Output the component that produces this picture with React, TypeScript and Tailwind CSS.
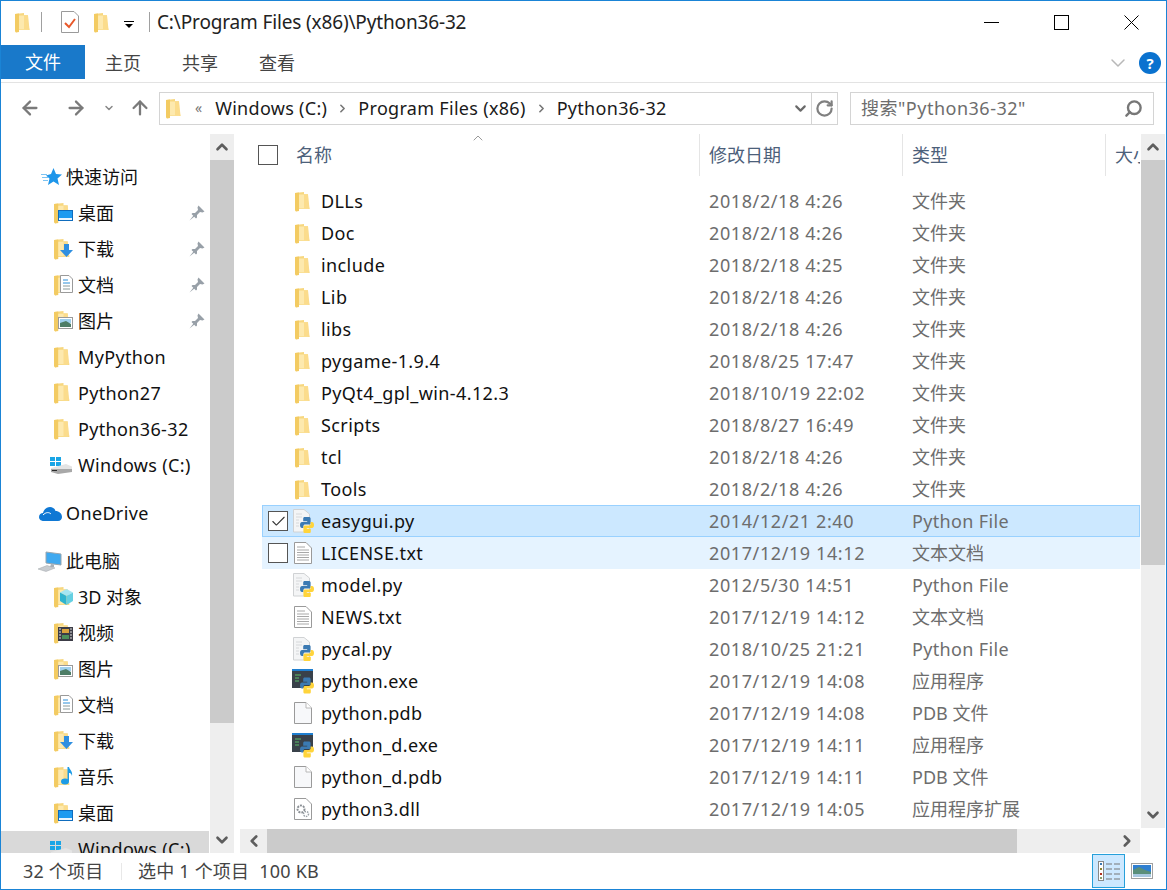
import React from 'react';
import { ArrowLeft, ArrowRight, ArrowUp, ChevronDown, ChevronUp, ChevronLeft, ChevronRight, RotateCw, Search, Check } from 'lucide-react';

const FONT = "font-['Noto_Sans','Noto_Sans_CJK_SC',sans-serif]";

// latin text in the reference runs a bit wider than Noto Sans, CJK does not
const track = (s: string) => (/[\u4e00-\u9fff]/.test(s) ? '' : 'tracking-[0.35px]');

const Folder: React.FC<{ size?: number }> = ({ size = 20 }) => (
  <svg width={size * 0.85} height={size * 1.05} viewBox="0 0 17 21" className="shrink-0">
    <path d="M1 2 L10 1 L10 3 L14 3 L14 15 L15.5 17 L15.5 18 L5 18 L2 20.5 L1 19 Z" fill="#f7d77f" />
    <path d="M1 2 L5 1.5 L5 20 L2 20.5 L1 19 Z" fill="#f3cb62" />
    <path d="M5 3.5 L14 3.5 L14.5 17.5 L5 17.5 Z" fill="#fde9ae" />
    <path d="M10 3.5 L14 3.5 L15.5 17.5 L10 17.5 Z" fill="#fbdc8c" />
  </svg>
);

const Overlay: React.FC<{ kind: string }> = ({ kind }) => {
  if (kind === 'desktop')
    return (
      <svg width="15" height="11" viewBox="0 0 15 11">
        <rect x="0.5" y="0.5" width="14" height="10" fill="#1e9bf0" stroke="#0f6cbd" />
        <rect x="1" y="8" width="13" height="2" fill="#eaf6ff" />
      </svg>
    );
  if (kind === 'down')
    return (
      <svg width="13" height="13" viewBox="0 0 13 13">
        <path d="M4 0 H9 V6 H13 L6.5 13 L0 6 H4 Z" fill="#2f8fe0" />
      </svg>
    );
  if (kind === 'doc')
    return (
      <svg width="13" height="18" viewBox="0 0 13 18">
        <path d="M.5.5 H9 L12.5 4 V17.5 H.5 Z" fill="#fff" stroke="#9a9a9a" />
        <path d="M3 5h5M3 8h7" stroke="#2d8fd8" />
        <path d="M3 11h7M3 14h7" stroke="#8a9a9a" />
      </svg>
    );
  if (kind === 'pic')
    return (
      <svg width="15" height="12" viewBox="0 0 15 12">
        <rect x="0.5" y="0.5" width="14" height="11" fill="#fff" stroke="#9a9a9a" />
        <rect x="2" y="2" width="11" height="4" fill="#9fd0ee" />
        <path d="M2 6 L8 4 L13 7 V10 H2 Z" fill="#4d7d66" />
      </svg>
    );
  if (kind === 'cube')
    return (
      <svg width="13" height="16" viewBox="0 0 13 16">
        <path d="M6.5 0 L13 3.5 L6.5 7 L0 3.5 Z" fill="#a5e6f2" />
        <path d="M0 3.5 L6.5 7 V16 L0 12 Z" fill="#2fb4cf" />
        <path d="M13 3.5 L6.5 7 V16 L13 12 Z" fill="#66d0e2" />
      </svg>
    );
  if (kind === 'video')
    return (
      <svg width="15" height="14" viewBox="0 0 15 14">
        <rect width="15" height="14" fill="#3c3c46" />
        <rect x="4" y="2" width="7" height="4" fill="#d9a23c" />
        <rect x="4" y="8" width="7" height="4" fill="#4c8f5a" />
        <path d="M1 2h2M1 5h2M1 8h2M1 11h2M12 2h2M12 5h2M12 8h2M12 11h2" stroke="#ddd" />
      </svg>
    );
  if (kind === 'music')
    return (
      <svg width="12" height="18" viewBox="0 0 12 18">
        <ellipse cx="4" cy="14.5" rx="4" ry="3" fill="#1c9be6" />
        <path d="M6.5 14 V0 H8 C8.5 3 12 4 11 9 C10.5 6.5 9 6 8 6 V14 Z" fill="#1c9be6" />
      </svg>
    );
  return null;
};

const SideFolder: React.FC<{ kind?: string }> = ({ kind }) => (
  <div className="relative w-[20px] h-[22px] shrink-0">
    <Folder size={21} />
    {kind && (
      <div className="absolute right-0 bottom-[3px] flex items-end">
        <Overlay kind={kind} />
      </div>
    )}
  </div>
);

const Pin = () => (
  <svg width="16" height="16" viewBox="0 0 16 16" className="shrink-0">
    <path d="M9.5 0.5 L15.5 6.5 L13.5 7.5 L11 7 L8 10 L8 12.5 L7 13.5 L2.5 9 L3.5 8 L6 8 L9 5 L8.5 2.5 Z" fill="#98a0a8" />
    <path d="M4.5 10.5 L0.5 15.5 L5.5 11.5 Z" fill="#98a0a8" />
  </svg>
);

const DriveIcon = () => (
  <svg width="23" height="17" viewBox="0 0 23 17" className="shrink-0">
    <rect x="0" y="0" width="5" height="4" fill="#19a5e6" />
    <rect x="6" y="0" width="5" height="4" fill="#19a5e6" />
    <rect x="0" y="5" width="5" height="4" fill="#19a5e6" />
    <rect x="6" y="5" width="5" height="4" fill="#19a5e6" />
    <path d="M1 11 L16 7 L22 9.5 V12 L1 12 Z" fill="#e4e4e4" />
    <path d="M1 12 H22 V15 L8 17 L1 15 Z" fill="#a8a8a8" />
    <rect x="2" y="13" width="5" height="1" fill="#2a2a2a" />
  </svg>
);

const StarIcon = () => (
  <svg width="21" height="18" viewBox="0 0 21 18">
    <path d="M12.5 0 L15 6 L21 6.5 L16.5 10.5 L18 17 L12.5 13.5 L7 17 L8.5 10.5 L5 7.5 L10 6 Z" fill="#1e96ea" />
    <path d="M0 6.5h6M1 9.5h6M2 12.5h5" stroke="#7cc3f2" />
  </svg>
);

const CloudIcon = () => (
  <svg width="23" height="15" viewBox="0 0 23 15">
    <path d="M5 15 C1 15 0 12.5 0 11 C0 8.5 2 7 4 7 C5 3 8 1 11 1 C14 1 16 3 16.5 5 C20 5 23 7.5 23 11 C23 13 21.5 15 19 15 Z" fill="#0f78d4" />
    <path d="M4 9 C7 6 10 6 12 8" stroke="#fff" strokeWidth="1" fill="none" />
  </svg>
);

const PcIcon = () => (
  <svg width="24" height="21" viewBox="0 0 24 21">
    <path d="M8 1 L23 3 V14 L8 12 Z" fill="#3fa9f0" stroke="#9aa6ae" />
    <path d="M13 13 L16 13.5 V16 L12 16 Z" fill="#a8b0b8" />
    <path d="M0 18 L9 14.5 L17 17 L8 20.5 Z" fill="#c8ccd0" stroke="#a0a4a8" strokeWidth="0.5" />
  </svg>
);

const SNAKE = 'M4.5 0 H8.8 C9.9 0 10.6 .7 10.6 1.6 V6 C10.6 7 9.8 7.6 8.9 7.6 H5.2 C4.2 7.6 3.4 8.3 3.4 9.3 V11 H2 C.8 11 0 10 0 8 C0 6 .8 5 2 5 H7.2 V4.3 H3.2 V1.6 C3.2 .6 3.8 0 4.5 0 Z';

// two-snake python logo, 14x16; the yellow one is the blue one turned half round
const Snakes: React.FC<{ x: number; y: number }> = ({ x, y }) => (
  <g transform={`translate(${x} ${y})`}>
    <path d={SNAKE} fill="#3b7ab3" />
    <path d={SNAKE} fill="#ffd43b" transform="rotate(180 7 8)" />
  </g>
);

const PyFile = () => (
  <svg width="22" height="24" viewBox="0 0 22 24" className="-ml-[2px]">
    <path d="M1.5 .5 H12 L17.5 5 V23 H1.5 Z" fill="#f4f5f6" stroke="#d0d2d4" />
    <path d="M4 5h6M4 8h6M4 11h3M4 14h3M4 17h3" stroke="#d6d8da" />
    <Snakes x={8} y={8} />
  </svg>
);

const ExeFile = () => (
  <svg width="22" height="25" viewBox="0 0 22 25" className="-ml-[2px]">
    <rect x="0" y="0" width="21" height="19" fill="#39414a" />
    <rect x="0" y="0" width="21" height="2" fill="#1f7fd0" />
    <path d="M3 6h6M3 9h4M3 12h4" stroke="#5fbf6a" />
    <Snakes x={8} y={8.5} />
  </svg>
);

const TxtFile = () => (
  <svg width="18" height="22" viewBox="0 0 18 22">
    <path d="M.5.5 H12 L17.5 6 V21.5 H.5 Z" fill="#fff" stroke="#9a9a9a" />
    <path d="M3 5h8M3 8h12M3 10.5h12M3 13h12M3 15.5h12M3 18h12" stroke="#a8a8a8" />
  </svg>
);

const BlankFile = () => (
  <svg width="18" height="22" viewBox="0 0 18 22">
    <path d="M.5.5 H12 L17.5 6 V21.5 H.5 Z" fill="#f7f8fa" stroke="#9a9a9a" />
    <path d="M12 .5 V6 H17.5" fill="#fff" stroke="#b8b8b8" />
  </svg>
);

const DllFile = () => (
  <svg width="18" height="22" viewBox="0 0 18 22">
    <path d="M.5.5 H12 L17.5 6 V21.5 H.5 Z" fill="#fff" stroke="#9a9a9a" />
    <circle cx="7" cy="11" r="3.5" fill="#fff" stroke="#8a8f94" strokeWidth="2" strokeDasharray="2 1" />
    <circle cx="12" cy="16" r="2.5" fill="#fff" stroke="#9aa0a6" strokeWidth="1.5" strokeDasharray="1.5 1" />
  </svg>
);

type SideRow = { label: string; icon: React.ReactNode; indent: number; pin?: boolean; gap?: boolean; selected?: boolean };

const sideRows: SideRow[] = [
  { label: '快速访问', icon: <StarIcon />, indent: 41 },
  { label: '桌面', icon: <SideFolder kind="desktop" />, indent: 53, pin: true },
  { label: '下载', icon: <SideFolder kind="down" />, indent: 53, pin: true },
  { label: '文档', icon: <SideFolder kind="doc" />, indent: 53, pin: true },
  { label: '图片', icon: <SideFolder kind="pic" />, indent: 53, pin: true },
  { label: 'MyPython', icon: <SideFolder />, indent: 53 },
  { label: 'Python27', icon: <SideFolder />, indent: 53 },
  { label: 'Python36-32', icon: <SideFolder />, indent: 53 },
  { label: 'Windows (C:)', icon: <DriveIcon />, indent: 50 },
  { label: 'OneDrive', icon: <CloudIcon />, indent: 39, gap: true },
  { label: '此电脑', icon: <PcIcon />, indent: 38, gap: true },
  { label: '3D 对象', icon: <SideFolder kind="cube" />, indent: 53 },
  { label: '视频', icon: <SideFolder kind="video" />, indent: 53 },
  { label: '图片', icon: <SideFolder kind="pic" />, indent: 53 },
  { label: '文档', icon: <SideFolder kind="doc" />, indent: 53 },
  { label: '下载', icon: <SideFolder kind="down" />, indent: 53 },
  { label: '音乐', icon: <SideFolder kind="music" />, indent: 53 },
  { label: '桌面', icon: <SideFolder kind="desktop" />, indent: 53 },
  { label: 'Windows (C:)', icon: <DriveIcon />, indent: 50, selected: true },
];

type FileRow = { name: string; date: string; type: string; icon: React.ReactNode; state?: 'selected' | 'hover' };

const dir = <Folder size={20} />;

const files: FileRow[] = [
  { name: 'DLLs', date: '2018/2/18 4:26', type: '文件夹', icon: dir },
  { name: 'Doc', date: '2018/2/18 4:26', type: '文件夹', icon: dir },
  { name: 'include', date: '2018/2/18 4:25', type: '文件夹', icon: dir },
  { name: 'Lib', date: '2018/2/18 4:26', type: '文件夹', icon: dir },
  { name: 'libs', date: '2018/2/18 4:26', type: '文件夹', icon: dir },
  { name: 'pygame-1.9.4', date: '2018/8/25 17:47', type: '文件夹', icon: dir },
  { name: 'PyQt4_gpl_win-4.12.3', date: '2018/10/19 22:02', type: '文件夹', icon: dir },
  { name: 'Scripts', date: '2018/8/27 16:49', type: '文件夹', icon: dir },
  { name: 'tcl', date: '2018/2/18 4:26', type: '文件夹', icon: dir },
  { name: 'Tools', date: '2018/2/18 4:26', type: '文件夹', icon: dir },
  { name: 'easygui.py', date: '2014/12/21 2:40', type: 'Python File', icon: <PyFile />, state: 'selected' },
  { name: 'LICENSE.txt', date: '2017/12/19 14:12', type: '文本文档', icon: <TxtFile />, state: 'hover' },
  { name: 'model.py', date: '2012/5/30 14:51', type: 'Python File', icon: <PyFile /> },
  { name: 'NEWS.txt', date: '2017/12/19 14:12', type: '文本文档', icon: <TxtFile /> },
  { name: 'pycal.py', date: '2018/10/25 21:21', type: 'Python File', icon: <PyFile /> },
  { name: 'python.exe', date: '2017/12/19 14:08', type: '应用程序', icon: <ExeFile /> },
  { name: 'python.pdb', date: '2017/12/19 14:08', type: 'PDB 文件', icon: <BlankFile /> },
  { name: 'python_d.exe', date: '2017/12/19 14:11', type: '应用程序', icon: <ExeFile /> },
  { name: 'python_d.pdb', date: '2017/12/19 14:11', type: 'PDB 文件', icon: <BlankFile /> },
  { name: 'python3.dll', date: '2017/12/19 14:05', type: '应用程序扩展', icon: <DllFile /> },
];

const Crumb: React.FC<{ label: string; last?: boolean }> = ({ label, last }) => (
  <>
    <span className="text-[#1a1a1a] tracking-[0.3px] whitespace-nowrap">{label}</span>
    {!last && <ChevronRight size={13} strokeWidth={3} className="text-[#777] mx-[9px] shrink-0" />}
  </>
);

const ScrollButton: React.FC<{ children: React.ReactNode; className?: string }> = ({ children, className }) => (
  <div className={`flex items-center justify-center bg-[#eeeeee] text-[#5d5d5d] ${className ?? ''}`}>{children}</div>
);

export default function App() {
  return (
    <div className={`${FONT} w-[1167px] h-[890px] bg-white border border-[#1a84d6] flex flex-col overflow-hidden text-[18px] leading-none text-black`}>
      {/* title bar */}
      <div className="h-[44px] flex items-center shrink-0 pl-[13px] pb-[2px]">
        <Folder size={20} />
        <div className="w-px h-[20px] bg-[#a0a0a0] ml-[10px] mr-[19px]" />
        <svg width="18" height="22" viewBox="0 0 18 22" className="shrink-0">
          <path d="M.5.5 H13 L17.5 5 V21.5 H.5 Z" fill="#fff" stroke="#9a9a9a" />
          <path d="M4 12 L8 16 L14 8" fill="none" stroke="#e8582a" strokeWidth="2" />
        </svg>
        <div className="ml-[14px]"><Folder size={20} /></div>
        <div className="ml-[14px] flex flex-col items-center gap-[2px] w-[10px] mt-[5px]">
          <div className="w-[10px] h-px bg-black" />
          <div className="w-0 h-0 border-l-[4px] border-r-[4px] border-t-[4px] border-l-transparent border-r-transparent border-t-black" />
        </div>
        <div className="w-px h-[20px] bg-[#a0a0a0] ml-[15px] mr-[7px]" />
        <span className="text-[19px] text-[#222] tracking-[-0.15px]">C:\Program Files (x86)\Python36-32</span>
        <div className="ml-auto flex items-center text-black">
          <div className="w-[70px] flex justify-center">
            <div className="w-[15px] h-px bg-black" />
          </div>
          <div className="w-[70px] flex justify-center">
            <div className="w-[15px] h-[15px] border border-black" />
          </div>
          <div className="w-[70px] flex justify-center">
            <svg width="15" height="15" viewBox="0 0 15 15">
              <path d="M.5.5 L14.5 14.5 M14.5 .5 L.5 14.5" stroke="#000" strokeWidth="1" />
            </svg>
          </div>
        </div>
      </div>
      {/* ribbon tabs */}
      <div className="h-[38px] flex items-stretch shrink-0 border-b border-[#e3e3e3]">
        <div className="w-[84px] h-[34px] bg-[#1979ca] text-white flex items-center justify-center">文件</div>
        <div className="flex items-center h-[34px] pt-[2px] text-[#444]">
          <span className="ml-[20px]">主页</span>
          <span className="ml-[41px]">共享</span>
          <span className="ml-[41px]">查看</span>
        </div>
        <div className="ml-auto flex items-center h-[36px] pr-[5px]">
          <ChevronDown size={24} strokeWidth={1.5} className="text-[#b8b8b8] mr-[9px]" />
          <div className="w-[22px] h-[22px] rounded-full bg-[#0a72cf] text-white text-[15px] font-bold flex items-center justify-center">?</div>
        </div>
      </div>
      {/* address bar */}
      <div className="h-[50px] flex items-center shrink-0 pl-[18px]">
        <ArrowLeft size={22} strokeWidth={2.5} className="text-[#7a7a7a] shrink-0" />
        <ArrowRight size={22} strokeWidth={2.5} className="text-[#7a7a7a] ml-[24px] shrink-0" />
        <ChevronDown size={12} strokeWidth={3} className="text-[#888] ml-[16px] shrink-0" />
        <ArrowUp size={22} strokeWidth={2.5} className="text-[#7a7a7a] ml-[14px] shrink-0" />
        <div className="ml-[8px] w-[679px] h-[33px] shrink-0 border border-[#d4d4d4] flex items-center pl-[5px]">
          <Folder size={20} />
          <span className="text-[#777] text-[14px] ml-[13px] mr-[13px]">«</span>
          <Crumb label="Windows (C:)" />
          <Crumb label="Program Files (x86)" />
          <Crumb label="Python36-32" last />
          <ChevronDown size={17} strokeWidth={3} className="text-[#6a6a6a] ml-auto mr-[2px]" />
          <div className="w-[26px] h-full border-l border-[#d4d4d4] flex items-center justify-center">
            <RotateCw size={19} strokeWidth={2.8} className="text-[#808080]" />
          </div>
        </div>
        <div className="ml-[12px] w-[304px] h-[33px] shrink-0 border border-[#d4d4d4] flex items-center px-[10px] text-[#6d6d6d]">
          <span className="tracking-[0.5px]">搜索"Python36-32"</span>
          <Search size={19} strokeWidth={3} className="ml-auto -scale-x-100 text-[#777]" />
        </div>
      </div>
      {/* main */}
      <div className="flex-1 min-h-0 flex pt-px">
        {/* navigation pane */}
        <div className="w-[208px] shrink-0 overflow-hidden pt-[25px] relative">
          {sideRows.map((row, i) => (
            <div
              key={i}
              className={`h-[36px] flex items-center shrink-0 ${row.selected ? 'bg-[#d9d9d9]' : ''} ${row.gap ? 'mt-[12px]' : ''}`}
            >
              <div className="shrink-0 flex items-center" style={{ marginLeft: row.indent - 1, width: (row.indent < 45 ? 66 : 78) - row.indent }}>
                {row.icon}
              </div>
              <span className={`text-[#111] ${track(row.label)}`}>{row.label}</span>
              {row.pin && <div className="ml-auto mr-[4px]"><Pin /></div>}
            </div>
          ))}
        </div>
        <div className="w-[24px] ml-px shrink-0 flex flex-col bg-[#eeeeee]">
          <ScrollButton className="h-[26px]"><ChevronUp size={18} strokeWidth={3.5} /></ScrollButton>
          <div className="h-[563px] bg-[#cbcbcb]" />
          <div className="flex-1" />
          <ScrollButton className="h-[26px]"><ChevronDown size={18} strokeWidth={3.5} /></ScrollButton>
        </div>
        {/* file list */}
        <div className="flex-1 min-w-0 flex flex-col ml-[6px]">
          <div className="flex-1 min-h-0 flex mr-px">
            <div className="flex-1 min-w-0 overflow-hidden">
              <div className="h-[51px] relative flex items-start text-[#4c607a]">
                <div className="w-[20px] h-[20px] border border-[#555] bg-white ml-[18px] mt-[11px] shrink-0" />
                <div className="w-[421px] h-[42px] flex items-center pl-[18px] shrink-0 relative">
                  名称
                  <ChevronUp size={16} strokeWidth={1} className="absolute left-[192px] top-[-4px] text-[#666]" />
                </div>
                <div className="w-[203px] h-[42px] flex items-center pl-[9px] border-l border-[#e5e5e5] shrink-0">修改日期</div>
                <div className="w-[203px] h-[42px] flex items-center pl-[9px] border-l border-[#e5e5e5] shrink-0">类型</div>
                <div className="w-[36px] h-[42px] flex items-center pl-[9px] border-l border-[#e5e5e5] overflow-hidden whitespace-nowrap">大小</div>
              </div>
              {files.map((f) => (
                <div
                  key={f.name}
                  className={`h-[32px] ml-[22px] flex items-center ${f.state === 'selected' ? 'bg-[#cce8ff] shadow-[inset_0_0_0_1px_#99d1ff]' : f.state === 'hover' ? 'bg-[#e5f3ff]' : ''}`}
                >
                  <div className="w-[30px] shrink-0 flex justify-center pl-[2px]">
                    {f.state && (
                      <div className="w-[20px] h-[20px] border border-[#555] bg-white flex items-center justify-center">
                        {f.state === 'selected' && <Check size={17} strokeWidth={1.5} className="text-[#333]" />}
                      </div>
                    )}
                  </div>
                  <div className="w-[29px] shrink-0 flex pl-[2px]">{f.icon}</div>
                  <div className="w-[388px] shrink-0 whitespace-nowrap text-[#111] tracking-[0.4px]">{f.name}</div>
                  <div className="w-[203px] shrink-0 text-[#6d6d6d] whitespace-nowrap tracking-[0.6px]">{f.date}</div>
                  <div className={`text-[#6d6d6d] whitespace-nowrap ${track(f.type)}`}>{f.type}</div>
                </div>
              ))}
            </div>
            <div className="w-[24px] ml-px shrink-0 flex flex-col bg-[#eeeeee]">
              <ScrollButton className="h-[26px]"><ChevronUp size={18} strokeWidth={3.5} /></ScrollButton>
              <div className="h-[405px] bg-[#cbcbcb]" />
              <div className="flex-1" />
              <ScrollButton className="h-[26px]"><ChevronDown size={18} strokeWidth={3.5} /></ScrollButton>
            </div>
          </div>
          <div className="h-[24px] shrink-0 flex mr-[26px] bg-[#eeeeee] mt-px">
            <ScrollButton className="w-[27px]"><ChevronLeft size={18} strokeWidth={3.5} /></ScrollButton>
            <div className="w-[750px] bg-[#cbcbcb]" />
            <div className="flex-1" />
            <ScrollButton className="w-[26px]"><ChevronRight size={18} strokeWidth={3.5} /></ScrollButton>
          </div>
        </div>
      </div>
      {/* status bar */}
      <div className="h-[36px] shrink-0 flex items-center pl-[22px] text-[#444]">
        <span className="tracking-[0.2px] w-[98px] shrink-0">32 个项目</span>
        <div className="w-px h-[17px] bg-[#e8e8e8] mr-[16px]" />
        <span className="tracking-[0.2px]">选中 1 个项目</span>
        <span className="ml-[10px] tracking-[0.2px]">100 KB</span>
        <div className="ml-auto flex items-center mr-[9px]">
          <div className="w-[33px] h-[34px] bg-[#cce8ff] border border-[#26a0da] flex items-center justify-center">
            <svg width="22" height="20" viewBox="0 0 22 20">
              <rect x="0.5" y="0.5" width="5" height="19" fill="#fff" stroke="#888" />
              <rect x="2" y="2" width="2" height="2" fill="#3b78b0" />
              <rect x="2" y="7" width="2" height="2" fill="#8a8230" />
              <rect x="2" y="12" width="2" height="2" fill="#b03020" />
              <rect x="2" y="16" width="2" height="2" fill="#88a070" />
              <path d="M8 3h6M16 3h6M8 8h6M16 8h6M8 13h6M16 13h6M8 18h6M16 18h6" stroke="#777" />
            </svg>
          </div>
          <div className="w-[31px] flex justify-center ml-[1px]">
            <svg width="22" height="16" viewBox="0 0 22 16">
              <rect x="0.5" y="0.5" width="21" height="15" fill="#fff" stroke="#a0a0a0" />
              <rect x="2" y="2" width="18" height="12" fill="#2f7fd0" />
              <path d="M2 7 L8 4 L14 7 L20 9 V11 H2 Z" fill="#5a8f7a" />
              <rect x="2" y="11" width="18" height="3" fill="#a8c8e0" />
            </svg>
          </div>
        </div>
      </div>
    </div>
  );
}
